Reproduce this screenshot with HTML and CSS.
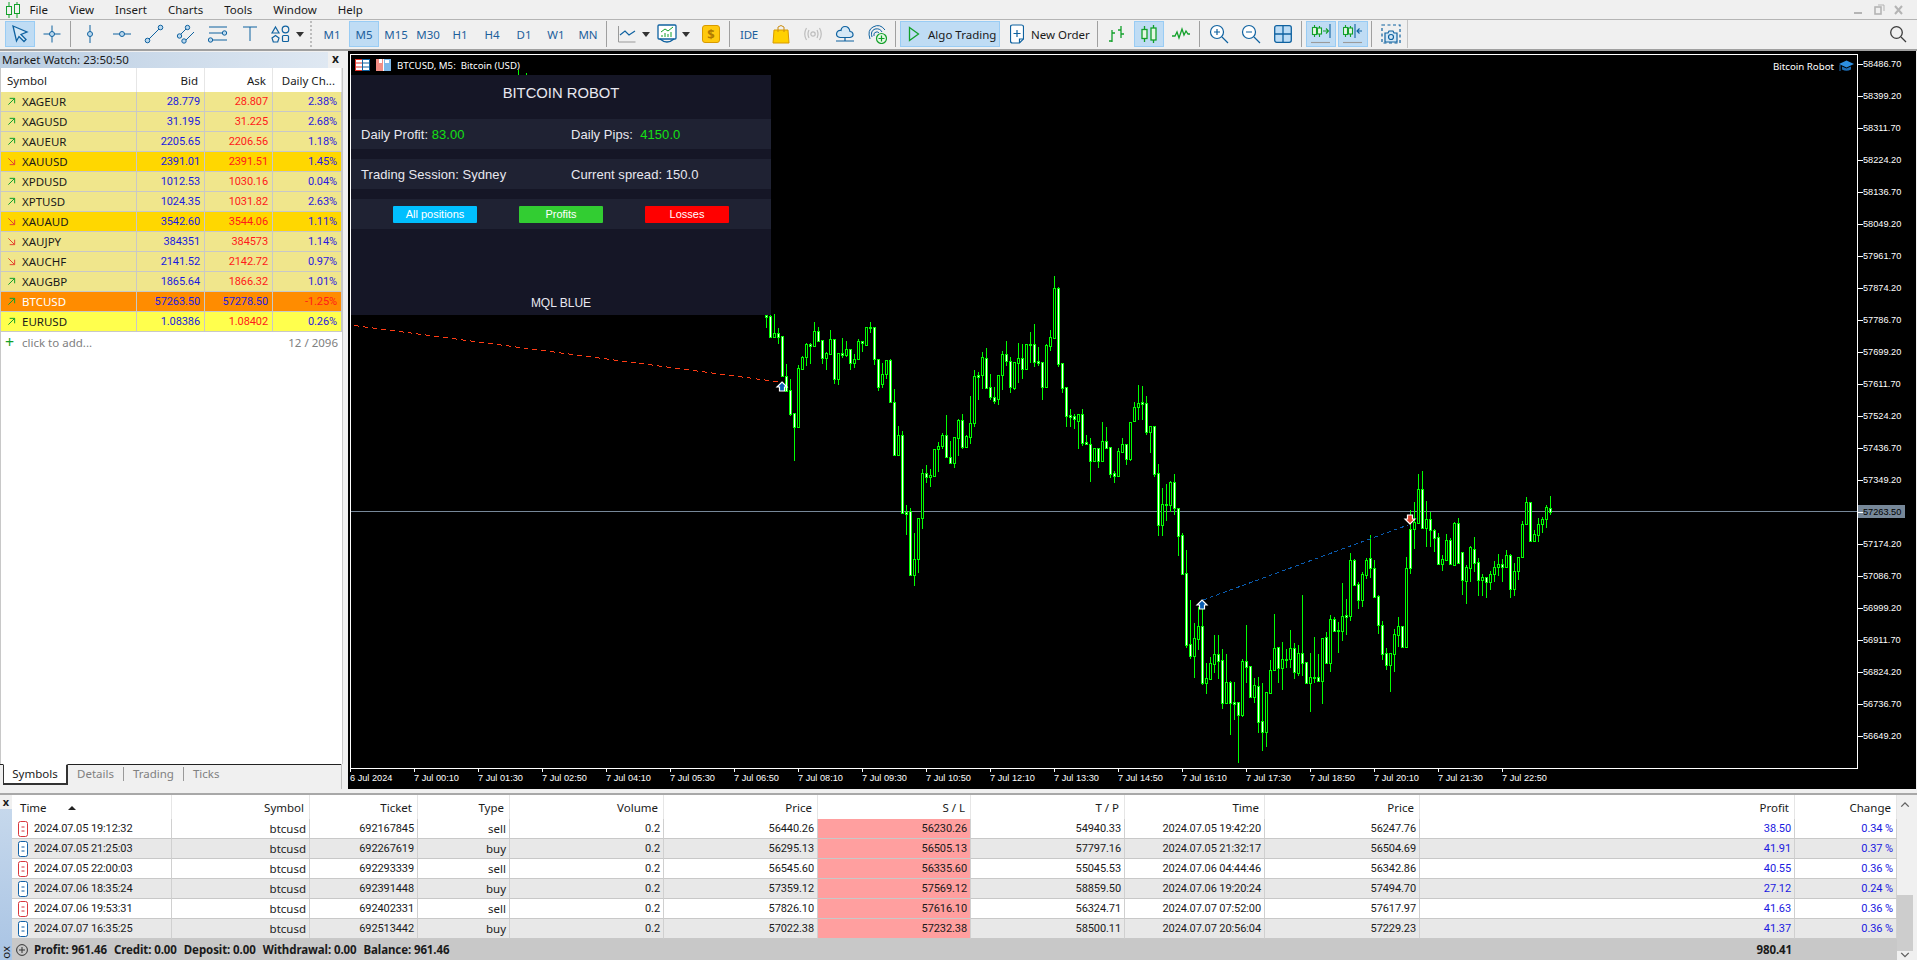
FILE: index.html
```html
<!DOCTYPE html>
<html lang="en">

<head>
    <meta charset="UTF-8">
    <meta name="viewport" content="width=device-width, initial-scale=1.0">
    <title>MetaTrader 5</title>
    <link rel="stylesheet" href="styles.css">
</head>

<body>
    <svg class="defs" aria-hidden="true">
        <symbol id="up" viewBox="0 0 10 10"><path d="M1.5 8.5 8.5 1.5M3 1.5h5.5V7" fill="none" stroke="#12a02a" stroke-width="1.1"/></symbol>
        <symbol id="down" viewBox="0 0 10 10"><path d="M1.5 1.5 8.5 8.5M3 8.5h5.5V3" fill="none" stroke="#e2452f" stroke-width="1.1"/></symbol>
        <symbol id="deal" viewBox="0 0 10 16"><rect x="0.5" y="0.5" width="9" height="15" rx="2" fill="#fff" stroke="currentColor"/><path d="M3.5 6h3M3.5 10h3" stroke="currentColor"/></symbol>
    </svg>

    <div class="menu">
        <svg class="app-logo" width="18" height="18" viewBox="0 0 18 18" fill="none" stroke="#12a02a">
            <path d="M5 1v16M13 1v16"/><rect x="2.5" y="5.5" width="5" height="8" fill="#f0f0f0"/><rect x="10.5" y="3.5" width="5" height="9" fill="#f0f0f0"/>
        </svg>
        <span>File</span><span>View</span><span>Insert</span><span>Charts</span><span>Tools</span><span>Window</span><span>Help</span>
        <div class="win-ctl">
            <svg width="58" height="14" viewBox="0 0 58 14" fill="none" stroke="#b4b4b4" stroke-width="2">
                <path d="M1 10h8"/><rect x="22" y="4" width="6" height="7" stroke-width="1.6"/><path d="M25 2h6v6" stroke-width="1"/><path d="M42 3l7 8M49 3l-7 8"/>
            </svg>
        </div>
    </div>

    <div class="toolbar">
        <div class="tb on"><svg width="20" height="20" viewBox="0 0 20 20"><path d="M3 2l14 6-6 2.5 5 5-2 2-5-5L6.500 17z" fill="#d5e8f6" stroke="#0f62a0" stroke-width="1.300"/></svg></div>
        <div class="tb"><svg width="20" height="20" viewBox="0 0 20 20" class="ico"><path d="M1.500 10h17M10 1.500v17"/><circle cx="10" cy="10" r="2.500" fill="#bcd9ee"/></svg></div>
        <div class="sep"></div>
        <div class="tb"><svg width="20" height="20" viewBox="0 0 20 20" class="ico"><path d="M10 1v18"/><circle cx="10" cy="10" r="2.500" fill="#bcd9ee"/></svg></div>
        <div class="tb"><svg width="20" height="20" viewBox="0 0 20 20" class="ico"><path d="M1 10h18"/><circle cx="10" cy="10" r="2.500" fill="#bcd9ee"/></svg></div>
        <div class="tb"><svg width="20" height="20" viewBox="0 0 20 20" class="ico"><path d="M4.500 15.500l11-11"/><circle cx="3.500" cy="16.500" r="2.300" fill="#bcd9ee"/><circle cx="16.500" cy="3.500" r="2.300" fill="#bcd9ee"/></svg></div>
        <div class="tb"><svg width="20" height="20" viewBox="0 0 20 20" class="ico"><path d="M4 11l7-7M9 17l9-9"/><circle cx="3.500" cy="12" r="2.200" fill="#bcd9ee"/><circle cx="11.500" cy="3.500" r="2.200" fill="#bcd9ee"/><circle cx="8" cy="17" r="2.200" fill="#bcd9ee"/></svg></div>
        <div class="tb"><svg width="20" height="20" viewBox="0 0 20 20" class="ico"><path d="M1 3h18M1 9h15M5 16h14"/><circle cx="16.500" cy="9" r="2.200" fill="#bcd9ee"/><circle cx="2.500" cy="16" r="2.200" fill="#bcd9ee"/></svg></div>
        <div class="tb"><svg width="20" height="20" viewBox="0 0 20 20" class="ico"><path d="M3 3h14M10 3v14"/></svg></div>
        <div class="tb-split split-shapes">
            <div class="tb"><svg width="20" height="20" viewBox="0 0 20 20" class="ico" stroke-width="1.200"><path d="M4.500 3l3.500 6H1z"/><circle cx="14.500" cy="5.500" r="3.300"/><path d="M4.500 11.500l3.500 2.500-1.300 4H2.300L1 14z"/><rect x="11.500" y="11.500" width="6" height="6" rx="1"/></svg></div>
            <i class="drop"></i>
        </div>
        <div class="grip"></div>
        <div class="tb tf">M1</div>
        <div class="tb tf on">M5</div>
        <div class="tb tf">M15</div>
        <div class="tb tf">M30</div>
        <div class="tb tf">H1</div>
        <div class="tb tf">H4</div>
        <div class="tb tf">D1</div>
        <div class="tb tf">W1</div>
        <div class="tb tf">MN</div>
        <div class="sep"></div>
        <div class="tb-split split-line">
            <div class="tb"><svg width="20" height="20" viewBox="0 0 20 20" fill="none"><path d="M1.500 2v16h17" stroke="#9a9a9a"/><path d="M3 11l5-4 4 4 6-4" stroke="#0f62a0" stroke-width="1.200"/></svg></div>
            <i class="drop"></i>
        </div>
        <div class="tb-split split-line">
            <div class="tb"><svg width="20" height="20" viewBox="0 0 20 20" fill="none"><rect x="1" y="1" width="18" height="14" rx="1" fill="#fff" stroke="#0f62a0" stroke-width="1.300"/><path d="M3 15q7 6 14 0" stroke="#0f62a0" stroke-width="1.300"/><path d="M4 8l4-3 3 2 5-4" stroke="#12a02a"/><path d="M5 13v-2M8 13V9M11 13v-3M14 13V8" stroke="#12a02a"/></svg></div>
            <i class="drop"></i>
        </div>
        <div class="tb dollar"><svg width="18" height="18" viewBox="0 0 18 18"><rect x="0.500" y="0.500" width="17" height="17" rx="2.500" fill="#ffc90e" stroke="#d89a00"/></svg><span>$</span></div>
        <div class="sep"></div>
        <div class="tb tf ide">IDE</div>
        <div class="tb"><svg width="18" height="20" viewBox="0 0 18 20"><path d="M2 6h14l1 13H1z" fill="#ffd000" stroke="#d89a00"/><path d="M6 8V3q3-3 6 0v5" fill="none" stroke="#c98c10"/></svg></div>
        <div class="tb"><svg width="20" height="20" viewBox="0 0 20 20" fill="none" stroke="#bdbdbd" stroke-width="1.200"><circle cx="10" cy="10" r="2.200"/><path d="M6 6q-2 4 0 8M14 6q2 4 0 8M3.500 4q-3.500 6 0 12M16.500 4q3.500 6 0 12"/></svg></div>
        <div class="tb"><svg width="20" height="20" viewBox="0 0 20 20" fill="#d5e8f6" stroke="#0f62a0" stroke-width="1.200"><path d="M5 13.500h10q3.500-.5 3-3.500-.5-2.500-3-2.500Q14 2.500 10 2.500 6.500 2.500 6 6.500q-4-.5-4.500 3.500 0 3 3.500 3.500z"/><path d="M1 17h18M10 13.500V17" fill="none"/></svg></div>
        <div class="tb"><svg width="20" height="20" viewBox="0 0 20 20" fill="none" stroke="#0f62a0"><path d="M3 15Q0 6 6 3q7-4 12 3M5 13Q3 7 8 5q5-1 7 3M7 12q-1-3 2-4 2-.5 3 1"/><circle cx="14.500" cy="14.500" r="5" fill="#e3f7e3" stroke="#12a02a" stroke-width="1.200"/><path d="M14.500 11.500v6M11.500 14.500h6" stroke="#12a02a" stroke-width="1.200"/></svg></div>
        <div class="sep"></div>
        <div class="tb tb-wide on algo"><svg width="12" height="16" viewBox="0 0 12 16"><path d="M1.500 1.500l9 6.500-9 6.500z" fill="none" stroke="#12a02a" stroke-width="1.300"/></svg><span>Algo Trading</span></div>
        <div class="tb tb-wide new-order"><svg width="14" height="20" viewBox="0 0 14 20" fill="#fff" stroke="#0f62a0" stroke-width="1.200"><path d="M2.500 1h9q2 0 2 2v12l-4 4h-7q-2 0-2-2V3q0-2 2-2z"/><path d="M7 6v7M3.500 9.500h7M9.500 19v-4h4" fill="none"/></svg><span>New Order</span></div>
        <div class="sep"></div>
        <div class="tb"><svg width="20" height="20" viewBox="0 0 20 20" fill="none" stroke="#12a02a" stroke-width="1.300"><path d="M5 6v12M2 17h3M5 9h3M14 2v12M11 6h3M14 10h3"/></svg></div>
        <div class="tb on"><svg width="20" height="20" viewBox="0 0 20 20" fill="none" stroke="#12a02a" stroke-width="1.300"><path d="M5.500 2v16M14.500 1v18"/><rect x="3" y="5.500" width="5" height="9" fill="#e3f7e3"/><rect x="12" y="4" width="5" height="12" fill="#e3f7e3"/></svg></div>
        <div class="tb"><svg width="20" height="20" viewBox="0 0 20 20" fill="none" stroke="#12a02a" stroke-width="1.300"><path d="M1 12h3l2-4 2 6 3-9 2 6 2-4 2 3h2"/></svg></div>
        <div class="sep"></div>
        <div class="tb"><svg width="20" height="20" viewBox="0 0 20 20" fill="#fff" stroke="#0f62a0" stroke-width="1.200"><circle cx="8" cy="8" r="6.500"/><path d="M13 13l6 6M8 5v6M5 8h6" fill="none"/></svg></div>
        <div class="tb"><svg width="20" height="20" viewBox="0 0 20 20" fill="#fff" stroke="#0f62a0" stroke-width="1.200"><circle cx="8" cy="8" r="6.500"/><path d="M13 13l6 6M5 8h6" fill="none"/></svg></div>
        <div class="tb"><svg width="18" height="18" viewBox="0 0 18 18" stroke="#0f62a0" stroke-width="1.300"><rect x="0.700" y="0.700" width="16.600" height="16.600" rx="2" fill="#bcdcf5"/><path d="M9 1v16M1 9h16"/></svg></div>
        <div class="sep"></div>
        <div class="tb on"><svg width="20" height="20" viewBox="0 0 20 20" fill="none" stroke-width="1.100"><g stroke="#12a02a"><path d="M3.500 1v12M8.500 2v11"/><rect x="1.500" y="3.500" width="4" height="7" fill="#e3f7e3"/><rect x="6.500" y="4" width="4" height="6" fill="#e3f7e3"/></g><path d="M12 7h5M15 4.500L17.500 7 15 9.500" stroke="#12a02a"/><path d="M19 0v14" stroke="#0f62a0"/><path d="M0 18.500h19" stroke="#9a9a9a"/></svg></div>
        <div class="tb on"><svg width="20" height="20" viewBox="0 0 20 20" fill="none" stroke-width="1.100"><g stroke="#12a02a"><path d="M2.500 1v12M7.500 2v11"/><rect x="0.500" y="3.500" width="4" height="7" fill="#e3f7e3"/><rect x="5.500" y="4" width="4" height="6" fill="#e3f7e3"/></g><path d="M12 0v14" stroke="#0f62a0"/><path d="M14 7h5M16.500 4.500L14 7l2.500 2.500" stroke="#0f62a0"/><path d="M0 18.500h19" stroke="#9a9a9a"/></svg></div>
        <div class="sep"></div>
        <div class="tb"><svg width="20" height="20" viewBox="0 0 20 20" fill="none" stroke="#0f62a0" stroke-width="1.200"><path d="M1 1h18v18H1z" stroke-dasharray="3 2.500"/><path d="M4 9h3l1-2h4l1 2h3v9H4z" fill="#d5e8f6"/><circle cx="10" cy="13" r="2.500"/></svg></div>
        <div class="sep sep-last"></div>
        <div class="tb search"><svg width="18" height="18" viewBox="0 0 18 18" fill="none" stroke="#3c3c3c" stroke-width="1.300"><circle cx="7.500" cy="7.500" r="5.800"/><path d="M12 12l5 5"/></svg></div>
    </div>

    <div class="main">
        <div class="watch">
            <div class="watch-title">
                <div class="watch-label">Market Watch: 23:50:50</div>
                <div class="close">x</div>
            </div>
            <div class="watch-body">
                <table class="watch-table">
                    <colgroup>
                        <col class="c-sym"><col class="c-px"><col class="c-px"><col class="c-chg">
                    </colgroup>
                    <thead>
                        <tr><th class="left">Symbol</th><th>Bid</th><th>Ask</th><th>Daily Ch...</th></tr>
                    </thead>
                    <tbody>
                        <tr class="khaki"><td><svg class="dir"><use href="#up"/></svg>XAGEUR</td><td class="bid">28.779</td><td class="ask">28.807</td><td class="chg">2.38%</td></tr>
                        <tr class="khaki"><td><svg class="dir"><use href="#up"/></svg>XAGUSD</td><td class="bid">31.195</td><td class="ask">31.225</td><td class="chg">2.68%</td></tr>
                        <tr class="khaki"><td><svg class="dir"><use href="#up"/></svg>XAUEUR</td><td class="bid">2205.65</td><td class="ask">2206.56</td><td class="chg">1.18%</td></tr>
                        <tr class="gold"><td><svg class="dir"><use href="#down"/></svg>XAUUSD</td><td class="bid">2391.01</td><td class="ask">2391.51</td><td class="chg">1.45%</td></tr>
                        <tr class="khaki"><td><svg class="dir"><use href="#up"/></svg>XPDUSD</td><td class="bid">1012.53</td><td class="ask">1030.16</td><td class="chg">0.04%</td></tr>
                        <tr class="khaki"><td><svg class="dir"><use href="#up"/></svg>XPTUSD</td><td class="bid">1024.35</td><td class="ask">1031.82</td><td class="chg">2.63%</td></tr>
                        <tr class="gold"><td><svg class="dir"><use href="#down"/></svg>XAUAUD</td><td class="bid">3542.60</td><td class="ask">3544.06</td><td class="chg">1.11%</td></tr>
                        <tr class="khaki"><td><svg class="dir"><use href="#down"/></svg>XAUJPY</td><td class="bid">384351</td><td class="ask">384573</td><td class="chg">1.14%</td></tr>
                        <tr class="khaki"><td><svg class="dir"><use href="#down"/></svg>XAUCHF</td><td class="bid">2141.52</td><td class="ask">2142.72</td><td class="chg">0.97%</td></tr>
                        <tr class="khaki"><td><svg class="dir"><use href="#up"/></svg>XAUGBP</td><td class="bid">1865.64</td><td class="ask">1866.32</td><td class="chg">1.01%</td></tr>
                        <tr class="orange"><td><svg class="dir"><use href="#up"/></svg>BTCUSD</td><td class="bid">57263.50</td><td class="bid">57278.50</td><td class="ask">-1.25%</td></tr>
                        <tr class="yellow"><td><svg class="dir"><use href="#up"/></svg>EURUSD</td><td class="bid">1.08386</td><td class="ask">1.08402</td><td class="chg">0.26%</td></tr>
                    </tbody>
                </table>
                <div class="add-row">
                    <span class="plus">+</span>
                    <span class="add-text">click to add...</span>
                    <span class="add-count">12 / 2096</span>
                </div>
            </div>
            <div class="tabs">
                <div class="tab active">Symbols</div>
                <div class="tab">Details</div>
                <div class="tab">Trading</div>
                <div class="tab">Ticks</div>
            </div>
        </div>

        <div class="chart">
            <div class="chart-top">
                <div class="plot">
                    <div class="plot-head">
                        <svg width="15" height="12" viewBox="0 0 15 12" stroke-width="1"><rect x="0.500" y="0.500" width="7" height="11" fill="#fff" stroke="#e0352b"/><rect x="7.500" y="0.500" width="7" height="11" fill="#fff" stroke="#0f62a0"/><path d="M1 4h6M1 8h6" stroke="#e0352b"/><path d="M8 4h6M8 8h6" stroke="#0f62a0"/></svg>
                        <svg width="15" height="12" viewBox="0 0 15 12"><rect x="0" y="0" width="7" height="12" fill="#f28d84"/><rect x="8" y="0" width="7" height="12" fill="#7db8e8"/><rect x="3" y="0" width="3" height="4" fill="#fff"/><rect x="9" y="1" width="4" height="3" fill="#fff"/><rect x="7" y="0" width="1" height="12" fill="#fff"/></svg>
                        <span>BTCUSD, M5: &nbsp;Bitcoin (USD)</span>
                    </div>
                    <div class="robot-name">
                        <span>Bitcoin Robot</span>
                        <svg width="15" height="13" viewBox="0 0 15 13"><path d="M0 4l7.500-3.500L15 4 7.500 7.500z" fill="#2e8fe0"/><path d="M3 6.500v3q4.500 2.500 9 0v-3L7.500 8.500z" fill="#1c6cb4"/><path d="M1 5v6" stroke="#1c6cb4" fill="none"/></svg>
                    </div>
                </div>
                <div class="price-axis">
                    <div class="price">58486.70</div>
                    <div class="price">58399.20</div>
                    <div class="price">58311.70</div>
                    <div class="price">58224.20</div>
                    <div class="price">58136.70</div>
                    <div class="price">58049.20</div>
                    <div class="price">57961.70</div>
                    <div class="price">57874.20</div>
                    <div class="price">57786.70</div>
                    <div class="price">57699.20</div>
                    <div class="price">57611.70</div>
                    <div class="price">57524.20</div>
                    <div class="price">57436.70</div>
                    <div class="price">57349.20</div>
                    <div class="price current">57263.50</div>
                    <div class="price">57174.20</div>
                    <div class="price">57086.70</div>
                    <div class="price">56999.20</div>
                    <div class="price">56911.70</div>
                    <div class="price">56824.20</div>
                    <div class="price">56736.70</div>
                    <div class="price">56649.20</div>
                </div>
            </div>
            <div class="time-axis">
                <div class="time">6 Jul 2024</div>
                <div class="time">7 Jul 00:10</div>
                <div class="time">7 Jul 01:30</div>
                <div class="time">7 Jul 02:50</div>
                <div class="time">7 Jul 04:10</div>
                <div class="time">7 Jul 05:30</div>
                <div class="time">7 Jul 06:50</div>
                <div class="time">7 Jul 08:10</div>
                <div class="time">7 Jul 09:30</div>
                <div class="time">7 Jul 10:50</div>
                <div class="time">7 Jul 12:10</div>
                <div class="time">7 Jul 13:30</div>
                <div class="time">7 Jul 14:50</div>
                <div class="time">7 Jul 16:10</div>
                <div class="time">7 Jul 17:30</div>
                <div class="time">7 Jul 18:50</div>
                <div class="time">7 Jul 20:10</div>
                <div class="time">7 Jul 21:30</div>
                <div class="time">7 Jul 22:50</div>
            </div>

            <svg class="series" viewBox="348 51 1569 738" shape-rendering="crispEdges">
                <rect x="351" y="511" width="1506" height="1" fill="#778899"/>
                <g id="candles"></g>
                <path d="M518 70v5M526 73v2" stroke="#00ff00" fill="none"/>
                <path d="M354 325.500 780 382" stroke="#ff3c14" stroke-dasharray="5 4" fill="none"/>
                <path d="M1203 600 1408 525" stroke="#0a5cb0" stroke-dasharray="4 3" fill="none"/>
                <g shape-rendering="auto">
                    <path d="M782 382l5 5h-2.500v4h-5v-4H777z" fill="#0a5cb0" stroke="#fff" stroke-width="1.200"/>
                    <path d="M1202 600l5 5h-2.500v4h-5v-4H1197z" fill="#0a5cb0" stroke="#fff" stroke-width="1.200"/>
                    <path d="M1410 524l-5-5h2.500v-4h5v4h2.500z" fill="#e0402a" stroke="#fff" stroke-width="1.200"/>
                </g>
            </svg>

            <div class="robot">
                <div class="robot-title">BITCOIN ROBOT</div>
                <div class="robot-row">
                    <div class="robot-cell">Daily Profit: <b>83.00</b></div>
                    <div class="robot-cell">Daily Pips: &nbsp;<b>4150.0</b></div>
                </div>
                <div class="robot-row">
                    <div class="robot-cell">Trading Session: Sydney</div>
                    <div class="robot-cell">Current spread: 150.0</div>
                </div>
                <div class="robot-row robot-btns">
                    <div class="robot-btn all">All positions</div>
                    <div class="robot-btn profits">Profits</div>
                    <div class="robot-btn losses">Losses</div>
                </div>
                <div class="robot-foot">MQL BLUE</div>
            </div>
        </div>
    </div>

    <div class="toolbox">
        <div class="toolbox-side">
            <div class="close">x</div>
            <div class="toolbox-strip"><span>ox</span></div>
        </div>
        <table class="trades">
            <colgroup>
                <col class="w160"><col class="w138"><col class="w108"><col class="w92"><col class="w154"><col class="w154"><col class="w153"><col class="w154"><col class="w140"><col class="w155"><col class="w375"><col class="w102">
            </colgroup>
            <thead>
                <tr><th class="left">Time <i class="sort"></i></th><th>Symbol</th><th>Ticket</th><th>Type</th><th>Volume</th><th>Price</th><th>S / L</th><th>T / P</th><th>Time</th><th>Price</th><th>Profit</th><th>Change</th></tr>
            </thead>
            <tbody>
                <tr><td class="left"><svg class="deal sell"><use href="#deal"/></svg>2024.07.05 19:12:32</td><td>btcusd</td><td>692167845</td><td>sell</td><td>0.2</td><td>56440.26</td><td class="sl">56230.26</td><td>54940.33</td><td>2024.07.05 19:42:20</td><td>56247.76</td><td class="gain">38.50</td><td class="gain">0.34 %</td></tr>
                <tr class="alt"><td class="left"><svg class="deal buy"><use href="#deal"/></svg>2024.07.05 21:25:03</td><td>btcusd</td><td>692267619</td><td>buy</td><td>0.2</td><td>56295.13</td><td class="sl">56505.13</td><td>57797.16</td><td>2024.07.05 21:32:17</td><td>56504.69</td><td class="gain">41.91</td><td class="gain">0.37 %</td></tr>
                <tr><td class="left"><svg class="deal sell"><use href="#deal"/></svg>2024.07.05 22:00:03</td><td>btcusd</td><td>692293339</td><td>sell</td><td>0.2</td><td>56545.60</td><td class="sl">56335.60</td><td>55045.53</td><td>2024.07.06 04:44:46</td><td>56342.86</td><td class="gain">40.55</td><td class="gain">0.36 %</td></tr>
                <tr class="alt"><td class="left"><svg class="deal buy"><use href="#deal"/></svg>2024.07.06 18:35:24</td><td>btcusd</td><td>692391448</td><td>buy</td><td>0.2</td><td>57359.12</td><td class="sl">57569.12</td><td>58859.50</td><td>2024.07.06 19:20:24</td><td>57494.70</td><td class="gain">27.12</td><td class="gain">0.24 %</td></tr>
                <tr><td class="left"><svg class="deal sell"><use href="#deal"/></svg>2024.07.06 19:53:31</td><td>btcusd</td><td>692402331</td><td>sell</td><td>0.2</td><td>57826.10</td><td class="sl">57616.10</td><td>56324.71</td><td>2024.07.07 07:52:00</td><td>57617.97</td><td class="gain">41.63</td><td class="gain">0.36 %</td></tr>
                <tr class="alt"><td class="left"><svg class="deal buy"><use href="#deal"/></svg>2024.07.07 16:35:25</td><td>btcusd</td><td>692513442</td><td>buy</td><td>0.2</td><td>57022.38</td><td class="sl">57232.38</td><td>58500.11</td><td>2024.07.07 20:56:04</td><td>57229.23</td><td class="gain">41.37</td><td class="gain">0.36 %</td></tr>
            </tbody>
            <tfoot>
                <tr>
                    <td colspan="10" class="left">
                        <svg class="sum-icon" width="12" height="12" viewBox="0 0 12 12" fill="none" stroke="#333"><circle cx="6" cy="6" r="5.400"/><path d="M3 6h6M6 3v6"/></svg>
                        <span>Profit: 961.46</span><span>Credit: 0.00</span><span>Deposit: 0.00</span><span>Withdrawal: 0.00</span><span>Balance: 961.46</span>
                    </td>
                    <td>980.41</td>
                    <td></td>
                </tr>
            </tfoot>
        </table>
        <div class="scroll">
            <svg width="12" height="8" viewBox="0 0 12 8" fill="none" stroke="#606060" stroke-width="1.500"><path d="M2 6l4-4 4 4"/></svg>
            <div class="scroll-track"><div class="scroll-thumb"></div></div>
            <svg width="12" height="8" viewBox="0 0 12 8" fill="none" stroke="#606060" stroke-width="1.500"><path d="M2 2l4 4 4-4"/></svg>
        </div>
    </div>

    <script src="chart.js"></script>
</body>

</html>
```

FILE: styles.css
```css
* {
    box-sizing: border-box;
}

html,
body {
    margin: 0;
    height: 100%;
    overflow: hidden;
}

body {
    display: flex;
    flex-direction: column;
    background: #f0f0f0;
    font-family: "Noto Sans", sans-serif;
    font-size: 11.5px;
    color: #1a1a1a;
}

.defs {
    display: none;
}

/* menu */
.menu {
    display: flex;
    align-items: center;
    flex: 0 0 20px;
    border-bottom: 1px solid #b4b4b4;
    padding-left: 18px;
    position: relative;
}

.menu span {
    padding: 0 10.5px;
}

.app-logo {
    margin-left: -14px;
    margin-right: -3px;
    flex: none;
}

.win-ctl {
    margin-left: auto;
    margin-right: 6px;
    display: flex;
}

/* toolbar */
.toolbar {
    display: flex;
    align-items: center;
    flex: 0 0 31px;
    padding: 0 3px 1px 4px;
    border-bottom: 2px solid #a0a0a0;
}

.tb {
    display: flex;
    align-items: center;
    justify-content: center;
    flex: none;
    width: 30px;
    height: 26px;
    margin: 0 1px;
    border: 1px solid transparent;
    position: relative;
}

.tb.on {
    background: #bfdcf4;
    border-color: #99ccf4;
}

.tf {
    font-size: 11.5px;
    color: #1c5f9c;
}

.ide {
    letter-spacing: -0.2px;
}

.ico {
    fill: none;
    stroke: #0f62a0;
}

.sep {
    flex: none;
    width: 1px;
    height: 26px;
    margin: 0 3px 0 2px;
    background: #a0a0a0;
}

.sep-last {
    margin-left: 0;
    height: 28px;
    background: #c4c4c4;
}

.grip {
    flex: none;
    width: 2px;
    height: 26px;
    margin: 0 4px;
    border-left: 2px dotted #bdbdbd;
}

.tb-split {
    display: flex;
    align-items: center;
    flex: none;
    width: 38px;
}

.tb-split .tb {
    margin: 0;
}

.split-shapes {
    margin-right: 2px;
}

.split-line {
    margin-right: 2px;
}

.sep + .split-line {
    margin-left: 2px;
}

.drop {
    width: 0;
    height: 0;
    border-left: 4px solid transparent;
    border-right: 4px solid transparent;
    border-top: 5px solid #333;
}

.dollar {
    margin-left: 4px;
}

.dollar span {
    position: absolute;
    inset: 0;
    display: flex;
    align-items: center;
    justify-content: center;
    font-size: 13px;
    font-weight: 700;
    color: #b07a00;
}

.tb-wide {
    width: auto;
}

.algo {
    width: 100px;
    justify-content: flex-start;
    padding-left: 7px;
    gap: 8px;
}

.new-order {
    width: 92px;
    justify-content: flex-start;
    padding-left: 7px;
    gap: 7px;
}

.search {
    margin-left: auto;
}

/* main row */
.main {
    display: flex;
    flex: 0 0 742px;
}

/* market watch */
.watch {
    display: flex;
    flex-direction: column;
    flex: 0 0 348px;
    height: 738px;
    padding-top: 1px;
    border-right: 2px solid #f0f0f0;
}

.watch-title {
    display: flex;
    flex: 0 0 16px;
    margin-right: 3px;
}

.watch-label {
    flex: 0 0 328px;
    padding-left: 2px;
    line-height: 15px;
    background: linear-gradient(to right, #b9cde2, #dfe8f2);
}

.close {
    flex: 1;
    text-align: center;
    font-size: 12px;
    font-weight: 700;
    line-height: 13px;
}

.watch-body {
    flex: 1;
    margin: 0 3px 0 0;
    background: #fff;
    border-left: 1px solid #c8c8c8;
    border-right: 1px solid #c8c8c8;
}

.watch-table {
    table-layout: fixed;
    border-collapse: separate;
    border-spacing: 0;
    width: 341px;
}

.c-sym {
    width: 136px;
}

.c-px {
    width: 68px;
}

.c-chg {
    width: 69px;
}

.watch-table th {
    height: 24px;
    padding: 0 6px;
    font-weight: 400;
    text-align: right;
    border-right: 1px solid #e6e6e6;
    white-space: nowrap;
}

.watch-table th.left {
    text-align: left;
}

.watch-table td {
    height: 20px;
    padding: 0 4px 0 3px;
    text-align: right;
    border-right: 1px solid #c8c8c8;
    border-bottom: 1px solid #c8c8c8;
    font-family: Roboto, sans-serif;
    font-size: 11px;
    letter-spacing: -0.1px;
}

.watch-table td:first-child {
    text-align: left;
    padding-left: 6px;
    font-family: "Noto Sans", sans-serif;
    font-size: 11.5px;
    letter-spacing: 0;
}

.dir {
    width: 9px;
    height: 9px;
    margin-right: 6px;
}

.khaki {
    background: #f0e68c;
}

.gold {
    background: #ffd700;
}

.orange {
    background: #ff8c00;
}

.orange td:first-child {
    color: #fff;
}

.yellow {
    background: #ffff4d;
}

.bid {
    color: #1a1ae0;
}

.ask {
    color: #ff1a1a;
}

.chg {
    color: #2a1ae0;
}

.add-row {
    display: flex;
    align-items: center;
    height: 20px;
    padding: 0 4px 0 4px;
    color: #808080;
}

.plus {
    width: 17px;
    font-size: 16px;
    line-height: 16px;
    color: #12a02a;
}

.add-count {
    margin-left: auto;
}

.tabs {
    display: flex;
    flex: 0 0 25px;
    padding-left: 3px;
    margin-right: 4px;
    background: linear-gradient(#222 1px, transparent 1px);
    border-right: 1px solid #c0c0c0;
    color: #808080;
}

.tab {
    padding: 0 9px;
    height: 20px;
    line-height: 18px;
    margin-top: 1px;
    position: relative;
}

.tab + .tab + .tab {
    border-left: 1px solid #999;
    height: 14px;
    margin-top: 3px;
    line-height: 14px;
}

.tab.active {
    width: 65px;
    margin-top: 0;
    height: 21px;
    text-align: center;
    padding: 0;
    color: #1a1a1a;
    background: #fff;
    border: 1px solid #333;
    border-top-color: #fff;
    border-right-width: 2px;
    border-bottom-width: 2px;
}

/* chart */
.chart {
    flex: 1;
    position: relative;
    height: 738px;
    margin-right: 1px;
    background: #000;
    overflow: hidden;
}

.chart-top {
    display: flex;
    height: 718px;
}

.plot {
    flex: 0 0 1508px;
    height: 715px;
    margin: 3px 0 0 2px;
    border: 1px solid #fff;
    border-right: 1px solid #fff;
    display: flex;
    justify-content: space-between;
    color: #fff;
    font-size: 9.7px;
}

.plot-head {
    display: flex;
    align-items: center;
    gap: 6px;
    height: 20px;
    padding-left: 4px;
}

.plot-head span {
    margin-left: 0;
}

.robot-name {
    display: flex;
    align-items: center;
    gap: 5px;
    height: 22px;
    padding-right: 3px;
}

.price-axis {
    flex: 1;
    padding-top: 7px;
    position: relative;
    z-index: 0;
}

.price {
    height: 32px;
    line-height: 12px;
    padding-left: 5px;
    color: #fff;
    font-family: "Liberation Sans", Arial, sans-serif;
    font-size: 9.2px;
    position: relative;
}

.price::before {
    content: "";
    position: absolute;
    left: 0;
    top: 6px;
    width: 5px;
    height: 1px;
    background: #fff;
}

.price.current {
    color: #000;
}

.price.current::after {
    content: "";
    position: absolute;
    left: 0;
    top: -1px;
    width: 47px;
    height: 13px;
    background: #778899;
    z-index: -1;
}

.time-axis {
    display: flex;
    margin-left: 2px;
    color: #fff;
    font-family: "Liberation Sans", Arial, sans-serif;
    font-size: 9.2px;
}

.time {
    flex: 0 0 64px;
    padding-top: 3px;
    line-height: 12px;
    white-space: nowrap;
    background: linear-gradient(#fff, #fff) left top / 1px 3px no-repeat;
}

.series {
    position: absolute;
    left: 0;
    top: 0;
    width: 1569px;
    height: 738px;
    pointer-events: none;
}

/* expert panel on top of the chart */
.robot {
    position: absolute;
    left: 3px;
    top: 24px;
    width: 420px;
    height: 240px;
    display: flex;
    flex-direction: column;
    background: #151626;
    color: #e8e8f0;
    font-family: "Liberation Sans", Arial, sans-serif;
    font-size: 13px;
}

.robot-title {
    height: 44px;
    line-height: 36px;
    text-align: center;
    font-size: 14.8px;
}

.robot-row {
    display: flex;
    align-items: center;
    flex: 0 0 30px;
    margin-bottom: 10px;
    padding-left: 10px;
    background: #1f2233;
}

.robot-cell {
    flex: 0 0 210px;
    letter-spacing: 0.05px;
}

.robot-cell b {
    font-weight: 400;
    color: #14e014;
}

.robot-btns {
    padding: 0 42px;
    justify-content: space-between;
}

.robot-btn {
    width: 84px;
    height: 17px;
    line-height: 17px;
    border-radius: 1px;
    color: #fff;
    text-align: center;
    font-size: 11px;
}

.all {
    background: #00bfff;
}

.profits {
    background: #32cd32;
}

.losses {
    background: #ff0000;
}

.robot-foot {
    margin-top: auto;
    height: 20px;
    text-align: center;
    font-size: 12px;
    line-height: 16px;
}

/* toolbox */
.toolbox {
    display: flex;
    flex: 1;
    min-height: 0;
    border-top: 2px solid #a8a8a8;
    background: #f0f0f0;
}

.toolbox-side {
    display: flex;
    flex-direction: column;
    flex: 0 0 12px;
}

.toolbox-side .close {
    flex: 0 0 14px;
    text-align: center;
    font-size: 11px;
    line-height: 13px;
}

.toolbox-strip {
    flex: 1;
    display: flex;
    justify-content: center;
    align-items: flex-end;
    background: linear-gradient(#c6d8ec, #a9c4e4);
}

.toolbox-strip span {
    writing-mode: vertical-rl;
    transform: rotate(180deg);
    margin-bottom: 1px;
    line-height: 12px;
}

.trades {
    table-layout: fixed;
    border-collapse: separate;
    border-spacing: 0;
    width: 1885px;
    height: 165px;
    background: #fff;
}

.w160 { width: 160px; }
.w138 { width: 138px; }
.w108 { width: 108px; }
.w92 { width: 92px; }
.w154 { width: 154px; }
.w153 { width: 153px; }
.w140 { width: 140px; }
.w155 { width: 155px; }
.w375 { width: 375px; }
.w102 { width: 102px; }

.trades th {
    height: 24px;
    padding: 0 5px;
    font-weight: 400;
    text-align: right;
    border-right: 1px solid #e6e6e6;
}

.trades th.left {
    text-align: left;
    padding-left: 8px;
}

.sort {
    display: inline-block;
    margin-left: 18px;
    vertical-align: 2px;
    border-left: 4px solid transparent;
    border-right: 4px solid transparent;
    border-bottom: 4px solid #222;
}

.trades td {
    height: 20px;
    padding: 0 3px 0 4px;
    text-align: right;
    border-right: 1px solid #d0d0d0;
    border-bottom: 1px solid #c8c8c8;
    font-family: Roboto, sans-serif;
    font-size: 11px;
    letter-spacing: -0.1px;
    white-space: nowrap;
}

.trades tbody td:nth-child(2),
.trades tbody td:nth-child(4) {
    font-family: "Noto Sans", sans-serif;
    font-size: 11.5px;
    letter-spacing: 0;
}

.trades td.left {
    text-align: left;
}

.deal {
    width: 10px;
    height: 16px;
    margin: 0 6px 0 2px;
    vertical-align: middle;
}

.sell {
    color: #d8373c;
}

.buy {
    color: #0f62a8;
}

.alt {
    background: #e8e8e8;
}

.sl {
    background: #ff9f9f;
}

.gain {
    color: #1a1ae0;
}

.trades tfoot td {
    height: 21px;
    background: #c8c8c8;
    border: 0;
    font-family: "Noto Sans", sans-serif;
    font-size: 11.5px;
    font-weight: 700;
    letter-spacing: -0.1px;
}

.trades tfoot span {
    margin-right: 7px;
}

.sum-icon {
    margin: 0 3px 0 0;
    vertical-align: -2px;
}

.scroll {
    display: flex;
    flex-direction: column;
    align-items: center;
    flex: 0 0 16px;
    padding: 6px 0 2px;
}

.scroll-track {
    flex: 1;
    width: 100%;
    padding-top: 84px;
    margin-top: 2px;
}

.scroll-thumb {
    height: 56px;
    background: #cdcdcd;
}
```

FILE: chart.js
```js
// candles: [high, body top, body bottom, low, filled], traced at 3x from the base y
const FIRST_X = 766;
const STEP = 4;

const SEG_A = { base: 260, data: [
    [165,165,170,205,1],[165,168,230,230,1],[162,220,230,230,0],[205,220,230,252,1],[228,228,347,347,1],
    [312,348,392,392,1],[358,390,462,468,1],[458,460,500,602,1],[316,325,500,503,0],[288,292,326,330,0],
    [250,252,292,318,0],[250,252,258,312,1],[186,214,257,257,0],[202,214,242,242,1],[240,241,293,312,1],
    [277,280,293,330,0],[210,238,281,281,0],[238,238,356,372,1],[280,280,356,375,0],[235,280,285,295,1],
    [243,268,284,290,0],[268,268,308,330,1],[282,296,308,324,0],[238,244,296,296,0],[244,244,250,276,1],
    [202,202,254,254,0],[186,202,203,218,1],[202,202,298,315,1],[298,298,380,393,1],[310,341,373,385,0],
    [300,301,341,357,0],[298,301,425,428,1],[388,425,584,587,1],[498,526,584,584,0],[514,526,760,760,1],
    [736,755,761,825,1],[745,752,946,946,1],[820,898,946,978,0],[775,775,898,938,0],[628,640,775,807,0],
    [615,640,652,670,1],[628,646,652,681,0],[566,568,648,650,0],[546,559,568,636,0],[520,526,559,568,0],
    [465,526,590,593,1],[543,590,608,608,1],[532,532,608,624,0],[478,481,533,588,0],[462,481,560,567,1],
    [526,529,561,564,0],[408,490,530,552,0],[330,349,490,501,0],[336,346,350,420,1],[277,292,346,388,0],
    [265,295,384,388,1],[342,382,412,420,1],[381,412,422,432,1],[346,346,418,435,0],[274,283,346,390,0],
    [243,283,304,318,1],[292,304,382,400,1],[306,306,384,390,0],[250,295,308,369,0],[252,295,326,357,1],
    [252,252,326,326,0],[216,252,255,310,1],[192,252,305,322,1],[261,304,308,318,1],[306,307,380,420,1],
    [253,255,380,380,0],[210,232,257,272,0],[48,84,233,233,0],[82,85,311,320,1],[310,310,383,400,1],
    [382,382,467,501,1],[447,465,470,501,1],[462,469,478,507,1],[463,463,482,567,0],[447,463,548,557,1],
    [525,547,553,556,1],[534,553,602,666,1],[565,565,602,602,0],[565,565,602,624,1],[487,544,602,602,0],
    [501,544,563,563,1],[562,562,641,654,1],[632,640,647,669,1],[565,574,647,647,0],[534,553,575,575,0],
    [553,553,597,615,1],[487,487,597,603,0],[426,442,482,482,0],[376,428,442,480,0],[378,426,432,480,1],
    [408,430,515,525,1],[499,499,515,579,0],[499,499,641,651,1],[612,640,794,828,1],[684,733,794,828,0],
    [672,733,736,783,1],[664,667,735,755,0],[642,667,745,765,1],[745,745,827,888,1]
] };

const SEG_B = { base: 450, data: [
    [250,256,372,374,1],[300,370,584,594,1],[450,582,618,626,1],[520,565,618,684,0],[470,529,566,600,0],
    [475,529,698,705,1],[640,684,698,731,0],[620,640,687,690,0],[556,613,641,670,0],[556,613,632,686,1],
    [598,631,758,776,1],[612,697,758,760,0],[694,696,760,855,1],[697,757,762,810,1],[757,757,794,938,1],
    [628,633,794,800,0],[526,634,650,700,1],[649,649,740,742,1],[685,706,740,760,0],[682,708,815,848,1],
    [700,814,845,902,1],[726,727,845,890,0],[630,661,728,730,0],[492,595,661,661,0],[590,592,653,700,1],
    [576,628,653,720,0],[596,628,630,654,1],[540,595,628,654,0],[580,595,665,688,1],[584,610,668,678,0],
    [435,610,638,678,1],[637,637,700,702,1],[610,682,700,786,0],[560,680,683,700,1],[612,680,692,694,1],
    [565,565,692,762,0],[546,562,638,640,1],[495,508,638,665,0],[502,507,542,546,1],[515,540,543,608,1],
    [400,499,542,574,0],[447,495,500,556,1],[310,331,497,513,0],[328,331,404,404,1],[396,403,449,476,1],
    [366,373,449,470,0],[325,331,374,388,0],[255,325,355,385,1],[331,355,440,440,1],[435,438,526,552,1],
    [512,526,611,630,1],[595,610,644,660,1],[610,610,644,726,0],[537,552,611,666,0],[502,529,555,590,0],
    [529,529,590,590,1],[322,355,590,590,0],[180,238,355,372,1],[157,217,238,297,0],[72,118,218,220,0],
    [63,118,233,235,1],[153,208,233,290,0],[185,208,241,290,1],[238,240,265,306,1],[250,262,341,345,1],
    [315,328,343,363,0],[252,270,330,332,0],[265,270,343,345,1],[217,220,345,345,0],[205,220,339,340,1],
    [306,307,390,435,1],[345,352,392,461,0],[288,292,355,395,0],[262,296,338,367,1],[325,337,390,438,1],
    [372,381,391,438,0],[380,382,397,443,1],[364,373,397,420,0],[332,352,373,395,0],[312,343,352,377,0],
    [328,343,351,396,1],[300,316,351,353,0],[311,316,417,443,1],[338,364,417,437,0],[320,320,364,390,0],
    [214,223,320,320,0],[142,157,223,223,0],[155,157,272,275,1],[240,253,272,272,0],[203,222,255,275,0],
    [200,208,222,250,0],[166,172,208,234,0],[138,175,185,195,1]
] };

const NS = 'http://www.w3.org/2000/svg';
const group = document.getElementById('candles');

function addRect(x, y, w, h, fill) {
    const r = document.createElementNS(NS, 'rect');
    r.setAttribute('x', x);
    r.setAttribute('y', y);
    r.setAttribute('width', w);
    r.setAttribute('height', h);
    r.setAttribute('fill', fill);
    group.appendChild(r);
}

let x = FIRST_X;
[SEG_A, SEG_B].forEach(seg => {
    seg.data.forEach(c => {
        const y = v => Math.round(seg.base + v / 3);
        const top = y(c[1]);
        const bottom = Math.max(y(c[2]), top + 1);
        addRect(x, y(c[0]), 1, Math.max(y(c[3]) - y(c[0]), 1), '#00ff00');
        addRect(x - 1, top, 3, bottom - top + 1, '#00ff00');
        if (bottom - top >= 2) {
            addRect(x, top + 1, 1, bottom - top - 1, c[4] ? '#ffffff' : '#000000');
        }
        x += STEP;
    });
});
```
